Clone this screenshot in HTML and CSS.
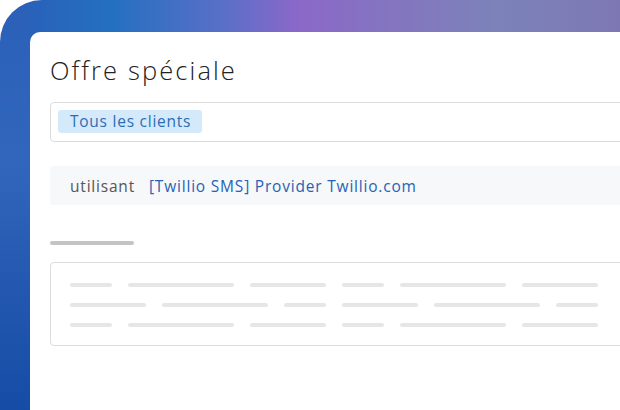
FILE: index.html
```html
<!DOCTYPE html>
<html lang="fr">
<head>
<meta charset="utf-8">
<title>Offre spéciale</title>
<link rel="stylesheet" href="styles.css">
</head>
<body>
<div class="frame">
  <div class="card">
    <h1 class="title">Offre spéciale</h1>
    <div class="input">
      <span class="tag">Tous les clients</span>
    </div>
    <div class="using">
      <span class="using-label">utilisant</span>
      <span class="using-link">[Twillio SMS] Provider Twillio.com</span>
    </div>
    <div class="label-bar"></div>
    <div class="textbox">
      <div class="line-row">
        <span class="ln w42"></span><span class="ln w106"></span><span class="ln w76"></span><span class="ln w42"></span><span class="ln w106"></span><span class="ln w76"></span>
      </div>
      <div class="line-row">
        <span class="ln w76"></span><span class="ln w106"></span><span class="ln w42"></span><span class="ln w76"></span><span class="ln w106"></span><span class="ln w42"></span>
      </div>
      <div class="line-row">
        <span class="ln w42"></span><span class="ln w106"></span><span class="ln w76"></span><span class="ln w42"></span><span class="ln w106"></span><span class="ln w76"></span>
      </div>
    </div>
  </div>
</div>
</body>
</html>
```

FILE: styles.css
```css
html, body {
  margin: 0;
  padding: 0;
  background: #ffffff;
  overflow: hidden;
}

body {
  width: 620px;
  height: 410px;
  font-family: "Open Sans", "Liberation Sans", sans-serif;
}

.frame {
  width: 620px;
  height: 410px;
  box-sizing: border-box;
  padding: 32px 0 0 30px;
  border-top-left-radius: 42px;
  overflow: hidden;
  background:
    linear-gradient(152deg, rgba(255,255,255,0) 0%, rgba(255,255,255,0) 58%, rgba(255,255,255,0.08) 58.5%, rgba(255,255,255,0.04) 100%),
    linear-gradient(180deg, #2b60b9 0%, #3266bc 40%, #2458b0 70%, #164ca6 100%) left top / 30px 100% no-repeat,
    linear-gradient(90deg, #2a5cb8 0%, #2470c0 18%, #5a6fc8 36%, #8b68c8 48%, #8474c0 62%, #7c82ba 80%, #7d78b4 100%);
}

.card {
  width: 640px;
  height: 400px;
  box-sizing: border-box;
  background: #ffffff;
  border-top-left-radius: 10px;
  padding: 20px 0 0 20px;
}

.title {
  margin: 0;
  font-weight: 300;
  font-size: 25.5px;
  line-height: 36px;
  letter-spacing: 2.1px;
  color: #222222;
}

.input {
  margin-top: 14px;
  height: 40px;
  box-sizing: border-box;
  border: 1px solid #dcdcdc;
  border-radius: 4px;
  padding: 7px 0 0 7px;
}

.tag {
  display: inline-block;
  height: 23px;
  line-height: 23px;
  padding: 0 11px 0 12px;
  background: #d4eafb;
  border-radius: 3px;
  color: #2c6db3;
  font-size: 15.5px;
  letter-spacing: 0.75px;
}

.using {
  margin-top: 24px;
  height: 39px;
  display: flex;
  align-items: center;
  gap: 14px;
  background: #f6f8fa;
  border-radius: 4px;
  padding-left: 20px;
  font-size: 15.5px;
  letter-spacing: 0.8px;
}

.using-label {
  color: #555555;
}

.using-link {
  color: #2763b3;
}

.label-bar {
  margin-top: 36px;
  width: 84px;
  height: 4px;
  border-radius: 2px;
  background: #c4c4c4;
}

.textbox {
  margin-top: 17px;
  height: 84px;
  box-sizing: border-box;
  border: 1px solid #dcdcdc;
  border-radius: 4px;
  padding: 20px 0 0 19px;
  display: flex;
  flex-direction: column;
  gap: 16px;
}

.line-row {
  display: flex;
  gap: 16px;
}

.ln {
  display: block;
  height: 4px;
  border-radius: 2px;
  background: #e6e6e6;
}

.w42 { width: 42px; }
.w76 { width: 76px; }
.w106 { width: 106px; }
```
